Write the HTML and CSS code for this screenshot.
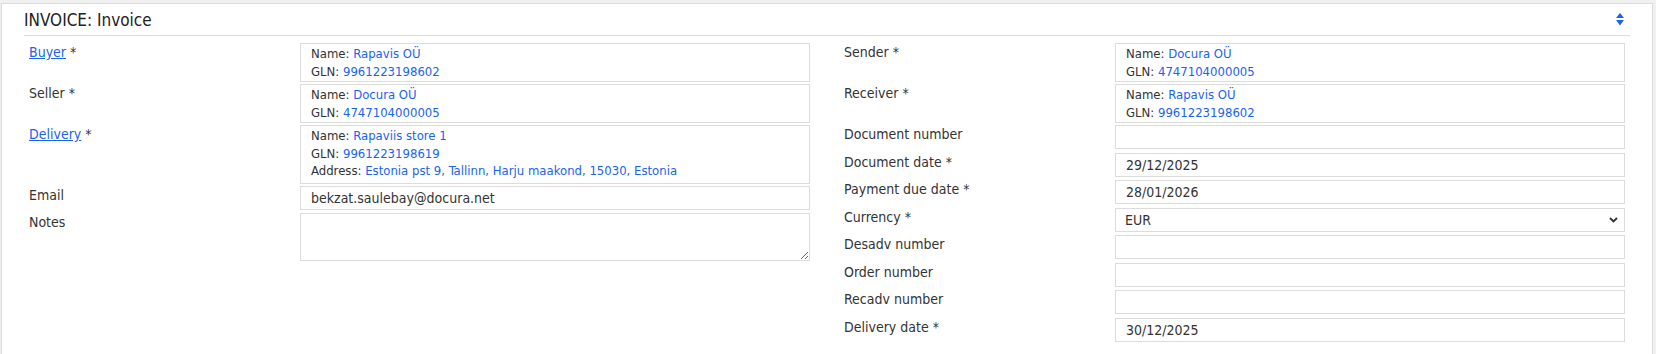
FILE: index.html
```html
<!DOCTYPE html>
<html lang="en">
<head>
  <meta charset="UTF-8" />
  <meta name="viewport" content="width=device-width, initial-scale=1.0" />
  <title>Invoice</title>
  <link rel="stylesheet" href="styles.css">
</head>
<body>
  <div class="panel">
    <div class="panel-header">
      <span class="panel-title">INVOICE: Invoice</span>
      <svg class="sort-icon" width="8" height="13" viewBox="0 0 8 13">
        <path d="M4 0 L8 5 L0 5 Z" fill="#1a62f0"/>
        <path d="M0 7 L8 7 L4 12.5 Z" fill="#1a62f0"/>
      </svg>
    </div>

    <div class="panel-body">
      <div class="form-col">
        <div class="form-row">
          <label class="form-label"><a href="#">Buyer</a> *</label>
          <div class="party-box">
            <div>Name: <span class="val">Rapavis OÜ</span></div>
            <div>GLN: <span class="val">9961223198602</span></div>
          </div>
        </div>
        <div class="form-row">
          <label class="form-label">Seller *</label>
          <div class="party-box">
            <div>Name: <span class="val">Docura OÜ</span></div>
            <div>GLN: <span class="val">4747104000005</span></div>
          </div>
        </div>
        <div class="form-row">
          <label class="form-label"><a href="#">Delivery</a> *</label>
          <div class="party-box with-address">
            <div>Name: <span class="val">Rapaviis store 1</span></div>
            <div>GLN: <span class="val">9961223198619</span></div>
            <div>Address: <span class="val">Estonia pst 9, Tallinn, Harju maakond, 15030, Estonia</span></div>
          </div>
        </div>
        <div class="form-row">
          <label class="form-label">Email</label>
          <input class="form-input" type="text" value="bekzat.saulebay@docura.net">
        </div>
        <div class="form-row">
          <label class="form-label">Notes</label>
          <textarea class="form-input notes"></textarea>
        </div>
      </div>

      <div class="form-col">
        <div class="form-row">
          <label class="form-label">Sender *</label>
          <div class="party-box">
            <div>Name: <span class="val">Docura OÜ</span></div>
            <div>GLN: <span class="val">4747104000005</span></div>
          </div>
        </div>
        <div class="form-row">
          <label class="form-label">Receiver *</label>
          <div class="party-box">
            <div>Name: <span class="val">Rapavis OÜ</span></div>
            <div>GLN: <span class="val">9961223198602</span></div>
          </div>
        </div>
        <div class="form-row">
          <label class="form-label">Document number</label>
          <input class="form-input" type="text" value="">
        </div>
        <div class="form-row">
          <label class="form-label">Document date *</label>
          <input class="form-input" type="text" value="29/12/2025">
        </div>
        <div class="form-row">
          <label class="form-label">Payment due date *</label>
          <input class="form-input" type="text" value="28/01/2026">
        </div>
        <div class="form-row">
          <label class="form-label">Currency *</label>
          <div class="select-wrap">
            <select class="form-input">
              <option>EUR</option>
              <option>USD</option>
            </select>
            <svg class="chevron" width="9" height="6" viewBox="0 0 9 6">
              <path d="M1 1 L4.5 4.5 L8 1" fill="none" stroke="#333" stroke-width="1.8"/>
            </svg>
          </div>
        </div>
        <div class="form-row">
          <label class="form-label">Desadv number</label>
          <input class="form-input" type="text" value="">
        </div>
        <div class="form-row">
          <label class="form-label">Order number</label>
          <input class="form-input" type="text" value="">
        </div>
        <div class="form-row">
          <label class="form-label">Recadv number</label>
          <input class="form-input" type="text" value="">
        </div>
        <div class="form-row">
          <label class="form-label">Delivery date *</label>
          <input class="form-input" type="text" value="30/12/2025">
        </div>
      </div>
    </div>
  </div>
</body>
</html>
```

FILE: styles.css
```css
* {
  box-sizing: border-box;
}

body {
  margin: 0;
  padding: 3px 3px 0 1px;
  background: #f0f0f0;
  font-family: 'DejaVu Sans Condensed', 'DejaVu Sans', sans-serif;
  color: #333;
}

.panel {
  background: #fff;
  border: 1px solid #dcdcdc;
  padding: 0 22px 10px 22px;
}

.panel-header {
  height: 32px;
  display: flex;
  align-items: center;
  justify-content: space-between;
  border-bottom: 1px solid #dcdcdc;
  padding-right: 6px;
}

.panel-title {
  font-size: 17px;
  color: #222;
}

.sort-icon {
  display: block;
}

.panel-body {
  display: grid;
  grid-template-columns: 1fr 1fr;
  column-gap: 34px;
  padding: 7px 5px 0 5px;
}

.form-col {
  display: flex;
  flex-direction: column;
  gap: 2px;
}

.form-row {
  display: grid;
  grid-template-columns: 271px 1fr;
  min-height: 25.57px;
}

.form-label {
  font-size: 14px;
  line-height: 18px;
  color: #333;
}

.form-label a {
  color: #1a62f0;
  text-decoration: underline;
}

.party-box {
  border: 1px solid #dcdcdc;
  padding: 1px 10px;
  font-size: 13px;
  line-height: 17.5px;
  color: #333;
}

.party-box.with-address {
  padding-bottom: 3px;
}

.val {
  color: #1a62f0;
}

.form-input {
  display: block;
  width: 100%;
  height: 24px;
  margin: 0;
  border: 1px solid #dcdcdc;
  padding: 0 10px;
  font-family: inherit;
  font-size: 14px;
  color: #333;
  background: #fff;
  outline: none;
}

.notes {
  height: 48px;
  resize: vertical;
}

.select-wrap {
  position: relative;
}

.select-wrap select {
  appearance: none;
  -webkit-appearance: none;
  padding-left: 9px;
}

.chevron {
  position: absolute;
  right: 7px;
  top: 9px;
  pointer-events: none;
}
```
